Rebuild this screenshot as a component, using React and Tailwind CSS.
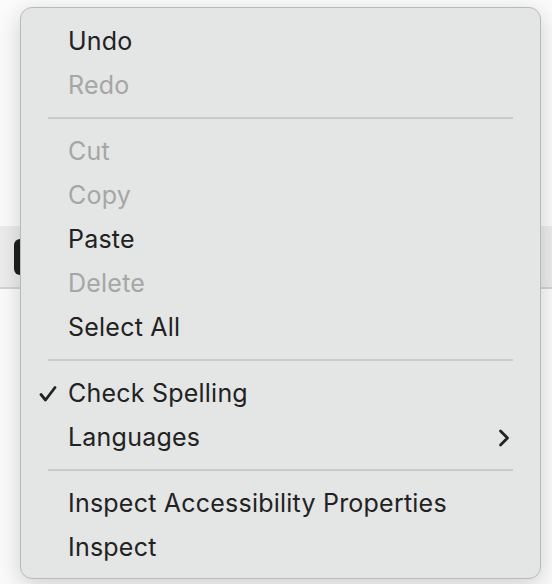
import React from 'react'

const items = [
  { label: 'Undo' },
  { label: 'Redo', disabled: true },
  { sep: true },
  { label: 'Cut', disabled: true },
  { label: 'Copy', disabled: true },
  { label: 'Paste' },
  { label: 'Delete', disabled: true },
  { label: 'Select All' },
  { sep: true },
  { label: 'Check Spelling', checked: true },
  { label: 'Languages', submenu: true },
  { sep: true },
  { label: 'Inspect Accessibility Properties' },
  { label: 'Inspect' },
]

const Check = () => (
  <svg width="18" height="16" viewBox="0 0 18 16" fill="none">
    <path d="M2 8.5 L6.5 14 L16 1.5" stroke="#222" strokeWidth="2.8" strokeLinecap="round" strokeLinejoin="round" />
  </svg>
)

const Chevron = () => (
  <svg width="12" height="18" viewBox="0 0 12 18" fill="none">
    <path d="M2.5 2 L9.5 9 L2.5 16" stroke="#222" strokeWidth="2.8" strokeLinecap="round" strokeLinejoin="round" />
  </svg>
)

const App = () => {
  return (
    <div className="relative w-[552px] h-[584px] bg-[#fbfbfb] overflow-hidden" style={{ fontFamily: 'Inter, "Noto Sans", sans-serif' }}>
      {/* toolbar behind the menu */}
      <div className="mt-[226px] h-[63px] bg-[#ececec] border-b-2 border-[#d4d4d4] flex items-center pl-[14px]">
        <div className="w-[14px] h-[36px] rounded-[6px] bg-[#1e1e1e]" />
      </div>

      <div className="absolute left-[20px] top-[7px] w-[521px] h-[572px] rounded-[12px] bg-[#e4e5e5] border border-[#b9b9b9] shadow-[0_6px_24px_rgba(0,0,0,0.18)] pt-[11px] pb-[9px] flex flex-col">
        {items.map((it, i) =>
          it.sep ? (
            <div key={i} className="h-[22px] flex items-center px-[27px]">
              <div className="h-[2px] w-full bg-[#c9caca]" />
            </div>
          ) : (
            <div key={i} className="h-[44px] flex items-center pt-[2px] pl-[18px] pr-[30px]">
              <span className="w-[29px] flex">{it.checked && <Check />}</span>
              <span className={`text-[25px] tracking-[0.22px] ${it.disabled ? 'text-[#a6a6a6]' : 'text-[#222222]'}`}>
                {it.label}
              </span>
              {it.submenu && (
                <span className="ml-auto flex">
                  <Chevron />
                </span>
              )}
            </div>
          )
        )}
      </div>
    </div>
  )
}

export default App
